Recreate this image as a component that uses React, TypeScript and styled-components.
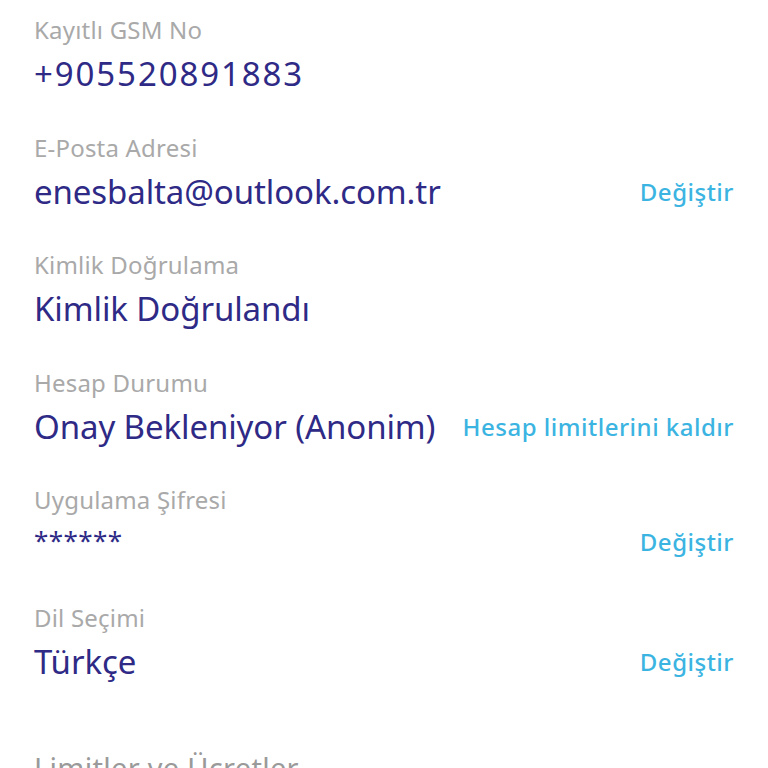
import React from "react";
import styled, { createGlobalStyle } from "styled-components";

const GlobalStyle = createGlobalStyle`
  html, body {
    margin: 0;
    padding: 0;
    background: #ffffff;
    font-family: "Noto Sans", "Open Sans", sans-serif;
  }
`;

type Kind = "text" | "digits" | "mask";

interface Field {
  label: string;
  value: string;
  kind?: Kind;
  action?: string;
}

const fields: Field[] = [
  { label: "Kayıtlı GSM No", value: "+905520891883", kind: "digits" },
  { label: "E-Posta Adresi", value: "enesbalta@outlook.com.tr", action: "Değiştir" },
  { label: "Kimlik Doğrulama", value: "Kimlik Doğrulandı" },
  {
    label: "Hesap Durumu",
    value: "Onay Bekleniyor (Anonim)",
    action: "Hesap limitlerini kaldır",
  },
  { label: "Uygulama Şifresi", value: "******", kind: "mask", action: "Değiştir" },
  { label: "Dil Seçimi", value: "Türkçe", action: "Değiştir" },
];

const spacingFor = (kind: Kind = "text") =>
  kind === "digits" ? "1.9px" : kind === "mask" ? "0.4px" : "-0.1px";

const FieldRow = ({ field }: { field: Field }) => (
  <Section>
    <Label>{field.label}</Label>
    <ValueRow>
      <Value $spacing={spacingFor(field.kind)} $mask={field.kind === "mask"}>
        {field.value}
      </Value>
      {field.action && <Action>{field.action}</Action>}
    </ValueRow>
  </Section>
);

const App = () => {
  return (
    <>
      <GlobalStyle />
      <Page>
        {fields.map((f) => (
          <FieldRow key={f.label} field={f} />
        ))}
        <Heading>Limitler ve Ücretler</Heading>
      </Page>
    </>
  );
};

export default App;

const Page = styled.div`
  height: 768px;
  overflow: hidden;
  padding: 14px 34px 0 34px;
  box-sizing: border-box;
`;

const Section = styled.div`
  display: flex;
  flex-direction: column;
  height: 117.5px;
`;

const Label = styled.div`
  font-size: 24px;
  line-height: 32px;
  color: #a9a9a9;
  letter-spacing: 0.2px;
`;

const ValueRow = styled.div`
  display: flex;
  justify-content: space-between;
  align-items: baseline;
  margin-top: 6px;
`;

const Value = styled.div<{ $spacing: string; $mask: boolean }>`
  font-size: ${(p) => (p.$mask ? "26px" : "33px")};
  line-height: 44px;
  color: #2e2a86;
  letter-spacing: ${(p) => p.$spacing};
  transform: ${(p) => (p.$mask ? "translateY(-4px)" : "none")};
`;

const Action = styled.div`
  font-size: 24px;
  font-weight: 500;
  color: #3cb4e2;
  letter-spacing: 0.5px;
  transform: translateY(-3px);
`;

const Heading = styled.div`
  margin-top: 31px;
  font-size: 29px;
  line-height: 36px;
  color: #9a9a9a;
  letter-spacing: 0.3px;
`;
